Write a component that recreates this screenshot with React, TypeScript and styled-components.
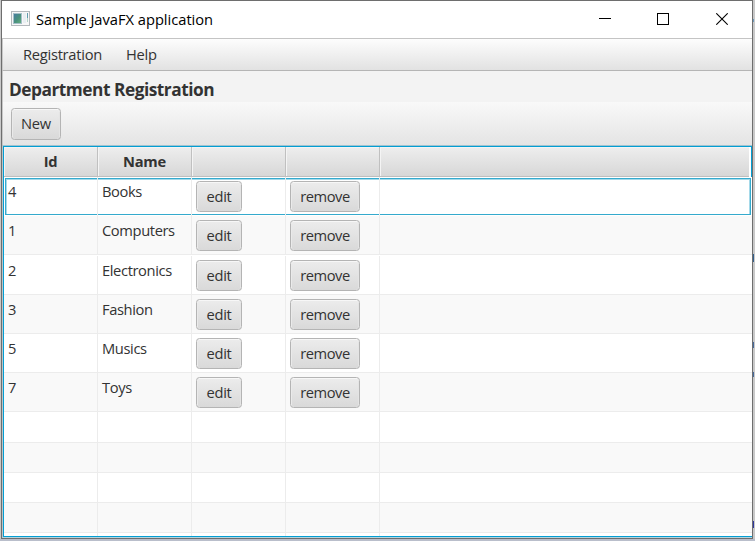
import React from "react";
import styled, { createGlobalStyle } from "styled-components";

const GlobalStyle = createGlobalStyle`
  * { box-sizing: border-box; }
  html, body { margin: 0; padding: 0; overflow: hidden; }
  body { font-family: "Open Sans", "Noto Sans", sans-serif; font-size: 14.7px; color: #333; }
`;

const Desktop = styled.div`
  width: 755px;
  height: 541px;
  padding: 0 2px 2px 1px;
  background:
    linear-gradient(#6d9cc0, #6d9cc0) 753px 19px / 1px 3px no-repeat,
    linear-gradient(#34618f, #34618f) 753px 254px / 1px 8px no-repeat,
    linear-gradient(#46699c, #46699c) 753px 342px / 1px 6px no-repeat,
    linear-gradient(#46699c, #46699c) 753px 372px / 1px 5px no-repeat,
    linear-gradient(#3038a0, #3038a0) 753px 521px / 1px 7px no-repeat,
    linear-gradient(#b9becb, #b9becb) 0 539px / 755px 2px no-repeat,
    #c9c9c9;
`;

const Window = styled.div`
  display: flex;
  flex-direction: column;
  width: 752px;
  height: 539px;
  border: 1px solid #6e6e6e;
  background: #f4f4f4;
`;

const TitleBar = styled.header`
  display: flex;
  align-items: center;
  height: 38px;
  flex: none;
  padding: 0 1px 0 9px;
  background: #fff;
  border-bottom: 1px solid #c4c4c4;
  color: #000;
`;

const Text = styled.span<{ $track?: number }>`
  display: block;
  padding-bottom: 2px;
  line-height: 18px;
  white-space: nowrap;
  letter-spacing: ${(p) => p.$track ?? -0.27}px;
`;

const WindowTitle = styled(Text)`
  flex: 1;
  margin-left: 5px;
`;

const WindowButton = styled.div`
  display: flex;
  width: 58.5px;
  height: 37px;
  padding-bottom: 1px;
  align-items: center;
  justify-content: center;
`;

const MenuBar = styled.nav`
  display: flex;
  flex: none;
  gap: 24px;
  height: 32px;
  padding: 6px 0 0 20px;
  border-left: 1px solid #c8c8c8;
  border-bottom: 1px solid #b5b5b5;
  background: linear-gradient(#fdfdfd, #e2e2e2);
`;

const Heading = styled.h1`
  flex: none;
  height: 31px;
  margin: 0;
  padding: 10px 0 0 6px;
  border-left: 1px solid #c8c8c8;
  background: #f3f3f3;
  font-size: 17.3px;
  font-weight: 700;
`;

const ToolBar = styled.div`
  flex: none;
  height: 43px;
  padding: 6px 0 0 8px;
  border-left: 1px solid #c8c8c8;
  background: linear-gradient(#f9f9f9, #e4e4e4);
`;

const Button = styled.button<{ $width: number; $height?: number }>`
  display: flex;
  justify-content: center;
  align-items: center;
  width: ${(p) => p.$width}px;
  height: ${(p) => p.$height ?? 31}px;
  padding: 0;
  border: 1px solid #b4b4b4;
  border-radius: 3.5px;
  background: linear-gradient(#ececec, #d9d9d9);
  box-shadow: inset 0 1px 0 #f7f7f7, inset 1px 0 0 #eaeaea, inset -1px 0 0 #e4e4e4;
  font: inherit;
  color: #333;
`;

const Table = styled.div`
  display: flex;
  flex-direction: column;
  flex: 1;
  min-height: 0;
  overflow: hidden;
  border-top: 1px solid #9fc3d0;
  border-left: 1px solid #b9c4c8;
  border-bottom: 1px solid #b3d4df;
`;

const TableBody = styled.div`
  flex: 1;
  min-height: 0;
  overflow: hidden;
  background: #fff;
  border-left: 1px solid #039ed3;
  border-top: 1px solid #039ed3;
  border-bottom: 1px solid #039ed3;
`;

const columns = "94px 94px 94px 94px 1fr";

const HeaderRow = styled.div`
  display: grid;
  grid-template-columns: ${columns};
  height: 30px;
  padding-right: 2px;
  border-right: 1px solid #039ed3;
`;

const HeaderCell = styled.div`
  padding-top: 5px;
  border-right: 1px solid #c0c0c0;
  border-bottom: 1px solid #bebebe;
  background: linear-gradient(#eeeeee, #d7d7d7);
  box-shadow: inset 1px 1px 0 #f4f4f4;
  text-align: center;
  font-weight: 700;
  &:last-child { border-right: 0; }
`;

const Row = styled.div<{ $height: number; $odd?: boolean; $offset?: number }>`
  display: grid;
  grid-template-columns: ${columns};
  height: ${(p) => p.$height}px;
  padding-top: ${(p) => p.$offset ?? 0}px;
  background: ${(p) => (p.$odd ? "#f9f9f9" : "#fff")};
  border-bottom: 1px solid #ececec;
`;

const FocusedRow = styled(Row)`
  position: relative;
  border-bottom: 0;
  &::before {
    content: "";
    position: absolute;
    inset: 1px 1px 1px 1px;
    border: 1px solid #35aacd;
    box-shadow: inset 1px 1px 0 #a5d9e9, inset -1px 0 0 #a5d9e9;
  }
`;

const Cell = styled.div`
  position: relative;
  padding: 4px 0 0 4px;
  border-right: 1px solid #ececec;
  &:last-child { border-right: 0; }
`;

const CellText = styled(Text)`
  padding-top: 1px;
`;

const AppIcon = () => (
  <svg width="20" height="17" viewBox="0 0 20 17" shapeRendering="crispEdges">
    <defs>
      <linearGradient id="screen" x1="0" y1="0" x2="1" y2="1">
        <stop offset="0" stopColor="#477d9f" />
        <stop offset=".55" stopColor="#49917c" />
        <stop offset="1" stopColor="#66af80" />
      </linearGradient>
    </defs>
    <rect x=".5" y=".5" width="18" height="14" fill="#f7f7f7" stroke="#b3b8bc" />
    <rect x="2" y="2" width="9" height="11" fill="#a6bfc9" />
    <rect x="3" y="3" width="7" height="9" fill="url(#screen)" />
    <rect x="12" y="2" width="3" height="10" fill="#e9eef2" />
    <rect x="16" y="2" width="1" height="5" fill="#609cae" />
    <rect x="16" y="7" width="1" height="4" fill="#b4d4c9" />
  </svg>
);

const MinimizeIcon = () => (
  <svg width="12" height="12"><path d="M0 5.5H12" stroke="#000" /></svg>
);
const MaximizeIcon = () => (
  <svg width="12" height="12"><rect x=".5" y=".5" width="11" height="11" fill="none" stroke="#000" /></svg>
);
const CloseIcon = () => (
  <svg width="12" height="12"><path d="M.3.3L11.7 11.7M11.7.3L.3 11.7" stroke="#000" strokeWidth="1.1" /></svg>
);

const departments = [
  { id: 4, name: "Books", height: 39 },
  { id: 1, name: "Computers", height: 39 },
  { id: 2, name: "Electronics", height: 40, offset: 1 },
  { id: 3, name: "Fashion", height: 39 },
  { id: 5, name: "Musics", height: 39 },
  { id: 7, name: "Toys", height: 39 },
];
const emptyRows = [31, 30, 30, 30, 30];

export default function App() {
  return (
    <>
      <GlobalStyle />
      <Desktop>
        <Window>
          <TitleBar>
            <AppIcon />
            <WindowTitle $track={-0.02}>Sample JavaFX application</WindowTitle>
            <WindowButton><MinimizeIcon /></WindowButton>
            <WindowButton><MaximizeIcon /></WindowButton>
            <WindowButton><CloseIcon /></WindowButton>
          </TitleBar>
          <MenuBar>
            <Text>Registration</Text>
            <Text>Help</Text>
          </MenuBar>
          <Heading><Text $track={-0.48}>Department Registration</Text></Heading>
          <ToolBar>
            <Button $width={50} $height={32}><Text>New</Text></Button>
          </ToolBar>
          <Table>
            <TableBody>
              <HeaderRow>
                <HeaderCell><Text>Id</Text></HeaderCell>
                <HeaderCell><Text>Name</Text></HeaderCell>
                <HeaderCell />
                <HeaderCell />
                <HeaderCell />
              </HeaderRow>
              {departments.map((d, i) => {
                const RowType = i === 0 ? FocusedRow : Row;
                return (
                  <RowType key={d.id} $height={d.height} $odd={i % 2 === 1} $offset={d.offset}>
                    <Cell><CellText>{d.id}</CellText></Cell>
                    <Cell><CellText $track={-0.38}>{d.name}</CellText></Cell>
                    <Cell><Button $width={46}><Text $track={-0.3}>edit</Text></Button></Cell>
                    <Cell><Button $width={70}><Text $track={-0.45}>remove</Text></Button></Cell>
                    <Cell />
                  </RowType>
                );
              })}
              {emptyRows.map((height, i) => (
                <Row key={i} $height={height} $odd={i % 2 === 1}>
                  <Cell /><Cell /><Cell /><Cell /><Cell />
                </Row>
              ))}
            </TableBody>
          </Table>
        </Window>
      </Desktop>
    </>
  );
}
